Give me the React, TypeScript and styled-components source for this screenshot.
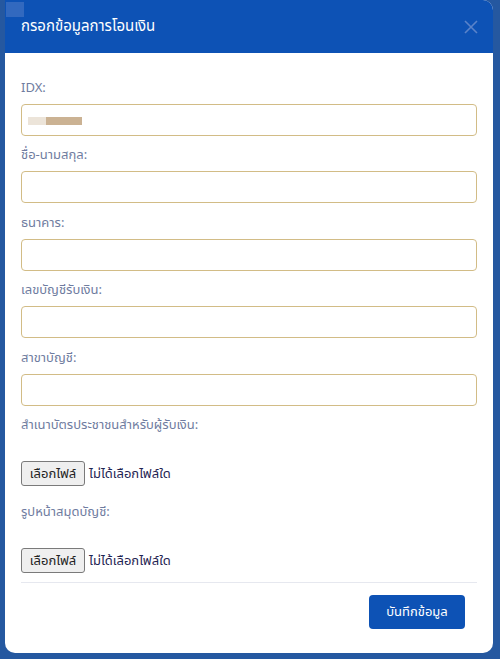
import styled, { createGlobalStyle } from 'styled-components';
import React from 'react';

const GlobalStyle = createGlobalStyle`
  html, body {
    margin: 0;
    padding: 0;
    background: #2558a0;
  }
  * { box-sizing: border-box; }
`;

const fields = ['IDX:', 'ชื่อ-นามสกุล:', 'ธนาคาร:', 'เลขบัญชีรับเงิน:', 'สาขาบัญชี:'];
const files = ['สำเนาบัตรประชาชนสำหรับผู้รับเงิน:', 'รูปหน้าสมุดบัญชี:'];

function App() {
  return (
    <>
      <GlobalStyle />
      <Backdrop>
        <Modal>
          <FocusMark />
          <Header>
            <Title>กรอกข้อมูลการโอนเงิน</Title>
            <Close aria-label="close">
              <svg width="14" height="14" viewBox="0 0 14 14">
                <path d="M1 1L13 13M13 1L1 13" stroke="currentColor" strokeWidth="1.6" />
              </svg>
            </Close>
          </Header>
          <Body>
            {fields.map((f, i) => (
              <Field key={f}>
                <Label>{f}</Label>
                <Input $masked={i === 0} readOnly />
              </Field>
            ))}
            {files.map((f) => (
              <FileField key={f}>
                <Label>{f}</Label>
                <FileRow>
                  <FileButton>เลือกไฟล์</FileButton>
                  <FileText>ไม่ได้เลือกไฟล์ใด</FileText>
                </FileRow>
              </FileField>
            ))}
          </Body>
          <Footer>
            <SaveButton>บันทึกข้อมูล</SaveButton>
          </Footer>
        </Modal>
      </Backdrop>
    </>
  );
}

export default App;

const font = `"Noto Sans Thai", "Noto Sans", "Liberation Sans", sans-serif`;

const Backdrop = styled.div`
  width: 500px;
  height: 659px;
  padding: 0 7px 6px 5px;
  background: #2558a0;
  font-family: ${font};
`

const Modal = styled.div`
  position: relative;
  height: 100%;
  background: #fff;
  border-radius: 0 10px 10px 10px;
  overflow: hidden;
  display: flex;
  flex-direction: column;
`

const FocusMark = styled.div`
  position: absolute;
  left: 1px;
  top: 2px;
  width: 18px;
  height: 15px;
  background: rgba(120, 150, 210, 0.35);
`

const Header = styled.div`
  height: 53px;
  flex: none;
  background: #0d52b5;
  display: flex;
  align-items: center;
  justify-content: space-between;
  padding: 0 15px 0 16px;
`

const Title = styled.h5`
  margin: 0;
  color: #fff;
  font-size: 15px;
  font-weight: 400;
`

const Close = styled.button`
  border: none;
  background: none;
  padding: 0;
  width: 14px;
  height: 14px;
  color: #5a83c9;
  display: flex;
`

const Body = styled.div`
  padding: 25px 16px 0;
`

const Field = styled.div`
  margin-bottom: 9px;
  &:nth-child(2n) {
    margin-bottom: 10px;
  }
`

const Label = styled.label`
  display: block;
  line-height: 20px;
  margin-bottom: 6px;
  font-size: 13px;
  color: #6f7ca0;
`

const Input = styled.input<{ $masked?: boolean }>`
  display: block;
  width: 100%;
  height: 32px;
  border: 1px solid #d2bc86;
  border-radius: 4px;
  outline: none;
  background: ${(p) =>
    p.$masked
      ? 'linear-gradient(90deg, #ece4d9 0 18px, #cbb293 18px 54px) no-repeat 6px 12px / 54px 8px, #fff'
      : '#fff'};
`

const FileField = styled.div`
  margin-bottom: 16px;
  &:last-child {
    margin-bottom: 9px;
  }
`

const FileRow = styled.div`
  margin-top: 26px;
  display: flex;
  align-items: center;
  gap: 4px;
  height: 25px;
`

const FileButton = styled.button`
  height: 25px;
  width: 64px;
  padding: 0;
  border: 1px solid #7a7a7a;
  border-radius: 3px;
  background: #efefef;
  color: #222;
  font-family: ${font};
  font-size: 13px;
`

const FileText = styled.span`
  font-size: 13px;
  color: #1f2452;
`

const Footer = styled.div`
  margin: 0 16px;
  border-top: 1px solid #e6e8ef;
  padding: 12px 12px 0;
  display: flex;
  justify-content: flex-end;
`

const SaveButton = styled.button`
  width: 96px;
  height: 34px;
  border: none;
  border-radius: 4px;
  background: #0d52b5;
  color: #fff;
  font-family: ${font};
  font-size: 13px;
`
